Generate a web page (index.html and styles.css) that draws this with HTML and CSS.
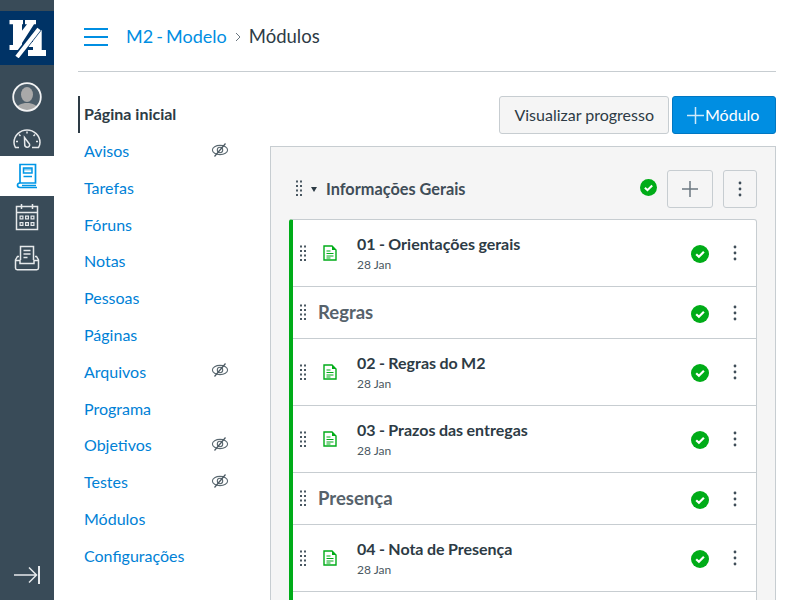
FILE: index.html
```html
<!DOCTYPE html>
<html lang="pt">
<head>
<meta charset="utf-8">
<title>Módulos</title>
<link rel="stylesheet" href="styles.css">
</head>
<body>
<svg class="defs" width="0" height="0">
  <symbol id="grip" viewBox="0 0 8 17"><g fill="#4a5862"><rect x="1" y="0.5" width="2" height="2"/><rect x="5" y="0.5" width="2" height="2"/><rect x="1" y="5" width="2" height="2"/><rect x="5" y="5" width="2" height="2"/><rect x="1" y="9.500" width="2" height="2"/><rect x="5" y="9.500" width="2" height="2"/><rect x="1" y="14" width="2" height="2"/><rect x="5" y="14" width="2" height="2"/></g></symbol>
  <symbol id="dots" viewBox="0 0 4 16"><g fill="#3f4d58"><circle cx="2" cy="2" r="1.400"/><circle cx="2" cy="8" r="1.400"/><circle cx="2" cy="14" r="1.400"/></g></symbol>
  <symbol id="ok" viewBox="0 0 18 18"><circle cx="9" cy="9" r="9" fill="#00ac18"/><path d="M5.200 9.200l2.700 2.600 5-5" fill="none" stroke="#fff" stroke-width="2.200"/></symbol>
  <symbol id="page" viewBox="0 0 14 16"><path d="M1 1h8l4 4v10H1z" fill="none" stroke="#00ac18" stroke-width="1.400"/><path d="M9 1v4h4z" fill="#00ac18"/><path d="M3.500 6h4M3.500 8.500h7M3.500 11h7M3.500 13h4" stroke="#00ac18" stroke-width="1.200"/></symbol>
  <symbol id="eye" viewBox="0 0 18 16"><ellipse cx="9" cy="8" rx="7.600" ry="4.600" fill="none" stroke="#5a6870" stroke-width="1.100"/><circle cx="9" cy="8" r="2.700" fill="none" stroke="#5a6870" stroke-width="1.100"/><path d="M3.500 14.500L14.500 1.500" stroke="#4a5862" stroke-width="1.200"/></symbol>
</svg>
<div class="app">
  <nav class="rail">
    <div class="logo">
      <svg width="38" height="40" viewBox="0 0 38 40"><g fill="#fff"><path d="M1.500 2H15V6.300H14V27H15V32H1.500V27H5V6.300H1.500Z"/><path d="M13 14L19 6.300H17V2H28V6.300H26L14 25H13Z"/><path d="M25 12H33.700V32H38V38H20V32H25V29H20L23 24H25Z"/></g><path d="M8 39.500L31.500 9.500" stroke="#003366" stroke-width="6.500" fill="none"/><path d="M9 39L31 11" stroke="#fff" stroke-width="4.200" fill="none"/></svg>
    </div>
    <div class="rail-item avatar-item">
      <svg width="30" height="30" viewBox="0 0 30 30"><defs><clipPath id="av"><circle cx="15" cy="15" r="13.500"/></clipPath></defs><circle cx="15" cy="15" r="13.500" fill="#4c5d69"/><g clip-path="url(#av)" fill="#a9a9a9"><ellipse cx="15" cy="12.500" rx="6" ry="7.500"/><path d="M3 30c1-7 6-9 12-9s11 2 12 9z"/></g><circle cx="15" cy="15" r="13.800" fill="none" stroke="#f2f3f4" stroke-width="1.800"/></svg>
    </div>
    <div class="rail-item dash-item">
      <svg width="28" height="20" viewBox="0 0 28 20" fill="none" stroke="#e6e9eb" stroke-width="1.500"><path d="M6 18.500H2.500C1.500 17 1 15 1 13.500 1 6.500 7 1 14 1S27 6.500 27 13.500c0 1.500-.5 3.500-1.500 5H19"/><path d="M14 2.500v2M6 5.500l1.500 1.500M22 5.500l-1.500 1.500M3 12.500h2M23 12.500h2"/><path d="M11.500 8.500l5 6.500c.7 2-1 3.600-2.700 3.300-1.500-.3-2.200-1.500-2.100-3z"/></svg>
    </div>
    <div class="rail-item active">
      <svg width="22" height="26" viewBox="0 0 22 26" fill="none" stroke="#0096e6"><path stroke-width="1.700" d="M4 20V1.500h15.500V20z"/><path stroke-width="1.700" d="M4 20c-2 0-2.500 1.200-2.500 2.300 0 1.200.7 2.200 2.500 2.200h17"/><path stroke-width="1.500" d="M6 22.500h14M7.500 5h8.500v5H7.500zM7.500 13.500h8.500"/><rect x="7.500" y="5" width="8.500" height="2.500" fill="#0096e6" opacity=".5" stroke="none"/></svg>
    </div>
    <div class="rail-item cal-item">
      <svg width="24" height="28" viewBox="0 0 24 28" fill="none" stroke="#e6e9eb" stroke-width="1.500"><rect x="1.500" y="3.500" width="21" height="23"/><path d="M1.500 9.500h21M6.500 1v5M17.500 1v5"/><g fill="#e6e9eb" stroke="none"><path d="M4.500 12.500h4v4h-4zM10 12.500h4v4h-4zM15.500 12.500h4v4h-4zM4.500 19h4v4h-4zM10 19h4v4h-4zM15.500 19h4v4h-4z"/></g><g fill="#394b58" stroke="none"><rect x="5.700" y="13.700" width="1.600" height="1.600"/><rect x="11.200" y="13.700" width="1.600" height="1.600"/><rect x="16.700" y="13.700" width="1.600" height="1.600"/><rect x="5.700" y="20.200" width="1.600" height="1.600"/><rect x="11.200" y="20.200" width="1.600" height="1.600"/><rect x="16.700" y="20.200" width="1.600" height="1.600"/></g></svg>
    </div>
    <div class="rail-item inbox-item">
      <svg width="26" height="26" viewBox="0 0 26 26" fill="none" stroke="#e6e9eb" stroke-width="1.500"><path d="M6.500 15V1.500h13V15"/><path d="M9.500 5.500h7M9.500 9h7M9.500 12.500h4"/><path d="M5 11.500H3.500L1.500 15v8c0 1 .7 1.700 1.700 1.700h19.600c1 0 1.700-.7 1.700-1.700v-8l-2-3.500H21"/><path d="M1.500 15.500h4.500v3h14v-3h4.500"/></svg>
    </div>
    <div class="rail-spacer"></div>
    <div class="rail-foot">
      <svg width="28" height="20" viewBox="0 0 28 20" fill="none" stroke="#e6e9eb"><path stroke-width="1.500" d="M1 10h22M16 2.500L23.500 10 16 17.500"/><path stroke-width="2" d="M26 1v18"/></svg>
    </div>
  </nav>
  <main class="main">
    <header class="crumbs">
      <span class="burger"><i></i><i></i><i></i></span>
      <a class="crumb-link">M2 - Modelo</a>
      <svg class="crumb-sep" width="6" height="10" viewBox="0 0 6 10" fill="none" stroke="#6b7780"><path d="M1 1l4 4-4 4"/></svg>
      <span class="crumb-here">Módulos</span>
    </header>
    <div class="columns">
      <ul class="course-nav">
        <li class="current"><a>Página inicial</a></li>
        <li><a>Avisos</a><svg class="eye"><use href="#eye"/></svg></li>
        <li><a>Tarefas</a></li>
        <li><a>Fóruns</a></li>
        <li><a>Notas</a></li>
        <li><a>Pessoas</a></li>
        <li><a>Páginas</a></li>
        <li><a>Arquivos</a><svg class="eye"><use href="#eye"/></svg></li>
        <li><a>Programa</a></li>
        <li><a>Objetivos</a><svg class="eye"><use href="#eye"/></svg></li>
        <li><a>Testes</a><svg class="eye"><use href="#eye"/></svg></li>
        <li><a>Módulos</a></li>
        <li><a>Configurações</a></li>
      </ul>
      <section class="content">
        <div class="toolbar">
          <button class="btn">Visualizar progresso</button>
          <button class="btn primary"><svg width="17" height="17" viewBox="0 0 17 17" stroke="#cfe9fa" stroke-width="1.500"><path d="M8.500 0v17M0 8.500h17"/></svg>Módulo</button>
        </div>
        <div class="module">
          <div class="module-head">
            <svg class="grip"><use href="#grip"/></svg>
            <span class="caret"></span>
            <h2>Informações Gerais</h2>
            <svg class="ok-head"><use href="#ok"/></svg>
            <button class="icon-btn add"><svg width="16" height="16" viewBox="0 0 16 16" stroke="#6b7780" stroke-width="1.500"><path d="M8 0v16M0 8h16"/></svg></button>
            <button class="icon-btn more"><svg class="dots"><use href="#dots"/></svg></button>
          </div>
          <div class="items">
            <div class="row page-row">
              <svg class="grip"><use href="#grip"/></svg><svg class="page"><use href="#page"/></svg>
              <div class="text"><strong>01 - Orientações gerais</strong><small>28 Jan</small></div>
              <svg class="ok"><use href="#ok"/></svg><svg class="dots"><use href="#dots"/></svg>
            </div>
            <div class="row head-row">
              <svg class="grip"><use href="#grip"/></svg><span class="sub">Regras</span>
              <svg class="ok"><use href="#ok"/></svg><svg class="dots"><use href="#dots"/></svg>
            </div>
            <div class="row page-row">
              <svg class="grip"><use href="#grip"/></svg><svg class="page"><use href="#page"/></svg>
              <div class="text"><strong>02 - Regras do M2</strong><small>28 Jan</small></div>
              <svg class="ok"><use href="#ok"/></svg><svg class="dots"><use href="#dots"/></svg>
            </div>
            <div class="row page-row">
              <svg class="grip"><use href="#grip"/></svg><svg class="page"><use href="#page"/></svg>
              <div class="text"><strong>03 - Prazos das entregas</strong><small>28 Jan</small></div>
              <svg class="ok"><use href="#ok"/></svg><svg class="dots"><use href="#dots"/></svg>
            </div>
            <div class="row head-row">
              <svg class="grip"><use href="#grip"/></svg><span class="sub">Presença</span>
              <svg class="ok"><use href="#ok"/></svg><svg class="dots"><use href="#dots"/></svg>
            </div>
            <div class="row page-row">
              <svg class="grip"><use href="#grip"/></svg><svg class="page"><use href="#page"/></svg>
              <div class="text"><strong>04 - Nota de Presença</strong><small>28 Jan</small></div>
              <svg class="ok"><use href="#ok"/></svg><svg class="dots"><use href="#dots"/></svg>
            </div>
            <div class="row page-row"></div>
          </div>
        </div>
      </section>
    </div>
  </main>
</div>
</body>
</html>
```
FILE: styles.css
```css
* { box-sizing: border-box; }
html, body { margin: 0; height: 600px; overflow: hidden; background: #fff; }
body { font-family: Lato, "Liberation Sans", sans-serif; color: #2d3b45; }
.defs { display: block; height: 0; }
a { color: #0081d6; text-decoration: none; }
.app { display: flex; height: 600px; overflow: hidden; }

.rail { width: 54px; flex: none; background: #394b58; display: flex; flex-direction: column; align-items: stretch; padding-top: 11px; }
.logo { height: 54px; background: #003366; display: flex; align-items: center; justify-content: center; }
.rail-item { display: flex; align-items: center; justify-content: center; }
.avatar-item { height: 32px; margin-top: 16px; }
.dash-item { height: 20px; margin-top: 16px; }
.rail-item.active { height: 40px; margin-top: 7px; background: #fff; }
.cal-item { height: 28px; margin-top: 7px; }
.inbox-item { height: 26px; margin-top: 14px; }
.rail-spacer { flex: 1; }
.rail-foot { height: 20px; margin-bottom: 15px; display: flex; justify-content: center; }

.main { flex: 1; min-width: 0; padding: 0 24px; }
.crumbs { height: 72px; border-bottom: 1px solid #c7cdd1; display: flex; align-items: center; padding-left: 6px; font-size: 18.5px; }
.burger { width: 24px; height: 18px; display: flex; flex-direction: column; justify-content: space-between; margin-right: 18px; margin-top: 3px; }
.burger i { display: block; height: 2px; background: #008ee2; }
.crumb-link { color: #008ee2; font-size: 18px; word-spacing: -1.500px; }
.crumb-sep { margin: 3px 8px 0 8px; }
.crumb-here { color: #2d3b45; }

.columns { display: flex; height: 528px; overflow: hidden; }
.course-nav { list-style: none; margin: 24px 0 0; padding: 0; width: 192px; flex: none; font-size: 16px; }
.course-nav li { height: 36.800px; display: flex; align-items: center; justify-content: space-between; padding: 0 41px 1.400px 6px; }
.course-nav .current { border-left: 2px solid #2d3b45; padding-left: 4px; }
.course-nav .current a { color: #2d3b45; font-weight: 700; }
.eye { width: 18px; height: 16px; margin-top: -2px; }

.content { flex: 1; min-width: 0; padding-top: 24px; }
.toolbar { display: flex; justify-content: flex-end; gap: 3px; margin-bottom: 12px; }
.btn { height: 38px; font: 400 16px Lato, "Liberation Sans", sans-serif; color: #2d3b45; background: #f5f5f5; border: 1px solid #c7cdd1; border-radius: 3px; padding: 0 14px 2px; display: flex; align-items: center; }
.btn.primary { background: #008ee2; border-color: #0077c2; color: #fff; gap: 1px; padding: 0 14px 2px 14px; width: 104px; }
.btn.primary svg { margin-top: 2px; }

.module { background: #f5f5f5; border: 1px solid #c7cdd1; border-bottom: 0; padding: 0 18px; height: 454px; overflow: hidden; }
.module-head { height: 72px; display: flex; align-items: center; padding-top: 12px; }
.module-head .grip { margin-left: 6px; margin-bottom: 2px; }
.grip { width: 8px; height: 17px; flex: none; }
.caret { width: 0; height: 0; border: 3.500px solid transparent; border-top: 5px solid #2d3b45; border-bottom: 0; margin: 0 9px 0 8px; }
.module-head h2 { margin: 0 0 2px; font-size: 16.300px; font-weight: 700; color: #3f4d58; flex: 1; }
.ok-head { width: 17px; height: 17px; margin-right: 10px; margin-top: -3px; }
.icon-btn { background: #f5f5f5; border: 1px solid #c7cdd1; border-radius: 3px; height: 38px; padding: 0; display: flex; align-items: center; justify-content: center; }
.icon-btn.add { width: 46px; margin-right: 10px; }
.icon-btn.more { width: 34px; }
.dots { width: 4px; height: 16px; flex: none; }

.items { background: #fff; border: 1px solid #c7cdd1; border-left: 4px solid #00ac18; border-radius: 3px 3px 0 0; }
.row { display: flex; align-items: center; border-bottom: 1px solid #c7cdd1; padding: 0 19px 0 6px; }
.page-row { height: 67px; }
.head-row { height: 52px; }
.page { width: 14px; height: 16px; margin-left: 16px; flex: none; }
.text { flex: 1; margin-left: 20px; display: flex; flex-direction: column; gap: 3px; }
.text strong { font-size: 16px; font-weight: 700; line-height: 20px; color: #2d3b45; word-spacing: -0.500px; }
.text small { font-size: 12px; line-height: 16px; color: #4a5862; }
.sub { flex: 1; margin-left: 11px; font-size: 18.500px; font-weight: 700; color: #56626b; padding-bottom: 2px; }
.ok { width: 18px; height: 18px; margin-right: 24px; margin-top: 2px; flex: none; }
```
